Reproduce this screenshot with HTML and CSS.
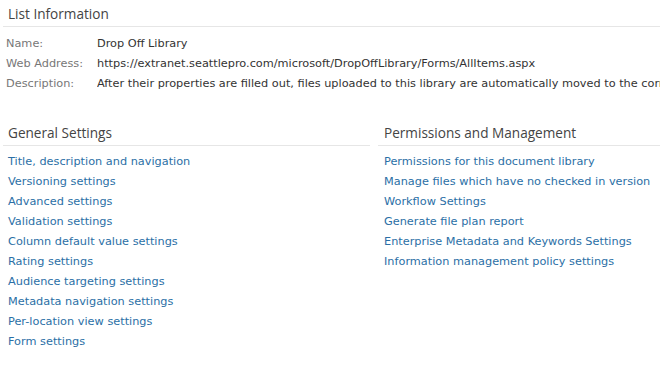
FILE: index.html
```html
<!DOCTYPE html>
<html lang="en">
<head>
    <meta charset="UTF-8">
    <title>Library Settings</title>
    <link rel="stylesheet" href="styles.css">
</head>
<body>
    <div class="list-info">
        <div class="section-title">List Information</div>
        <div class="info-grid">
            <div class="info-label">Name:</div><div class="info-value">Drop Off Library</div>
            <div class="info-label">Web Address:</div><div class="info-value">https://extranet.seattlepro.com/microsoft/DropOffLibrary/Forms/AllItems.aspx</div>
            <div class="info-label">Description:</div><div class="info-value">After their properties are filled out, files uploaded to this library are automatically moved to the correct library or folder based on rules defined by the site owner.</div>
        </div>
    </div>

    <div class="settings">
        <div class="settings-col left">
            <div class="section-title">General Settings</div>
            <ul class="link-list">
                <li><a href="#">Title, description and navigation</a></li>
                <li><a href="#">Versioning settings</a></li>
                <li><a href="#">Advanced settings</a></li>
                <li><a href="#">Validation settings</a></li>
                <li><a href="#">Column default value settings</a></li>
                <li><a href="#">Rating settings</a></li>
                <li><a href="#">Audience targeting settings</a></li>
                <li><a href="#">Metadata navigation settings</a></li>
                <li><a href="#">Per-location view settings</a></li>
                <li><a href="#">Form settings</a></li>
            </ul>
        </div>
        <div class="settings-col right">
            <div class="section-title">Permissions and Management</div>
            <ul class="link-list">
                <li><a href="#">Permissions for this document library</a></li>
                <li><a href="#">Manage files which have no checked in version</a></li>
                <li><a href="#">Workflow Settings</a></li>
                <li><a href="#">Generate file plan report</a></li>
                <li><a href="#">Enterprise Metadata and Keywords Settings</a></li>
                <li><a href="#">Information management policy settings</a></li>
            </ul>
        </div>
    </div>
</body>
</html>
```

FILE: styles.css
```css
body {
    margin: 0;
    font-family: "DejaVu Sans", Verdana, sans-serif;
    font-size: 11.3px;
    color: #333;
    background-color: #fff;
    overflow: hidden;
    white-space: nowrap;
}
.section-title {
    font-family: "Open Sans", "Segoe UI", sans-serif;
    font-size: 13.6px;
    color: #444;
    height: 26px;
    line-height: 26px;
    padding-left: 5px;
    border-bottom: 1px solid #e6e6e6;
    box-sizing: border-box;
}
.list-info {
    padding: 1px 0 0 3px;
}
.info-grid {
    display: grid;
    grid-template-columns: 91px 1fr;
    grid-auto-rows: 20px;
    align-items: center;
    margin: 6px 0 0 3px;
    overflow: hidden;
}
.info-label {
    color: #777;
}
.info-value {
    color: #333;
    overflow: hidden;
}
.settings {
    display: flex;
    margin-top: 27px;
    padding-left: 3px;
}
.settings-col.left {
    width: 367px;
}
.settings-col.right {
    flex: 1;
    margin-left: 8px;
}
.settings-col.right .section-title {
    padding-left: 6px;
}
.link-list {
    list-style: none;
    margin: 6px 0 0;
    padding: 0 0 0 5px;
}
.settings-col.right .link-list {
    padding-left: 6px;
}
.link-list li {
    height: 20px;
    line-height: 20px;
}
.link-list a {
    color: #2b6fa6;
    text-decoration: none;
}
```
